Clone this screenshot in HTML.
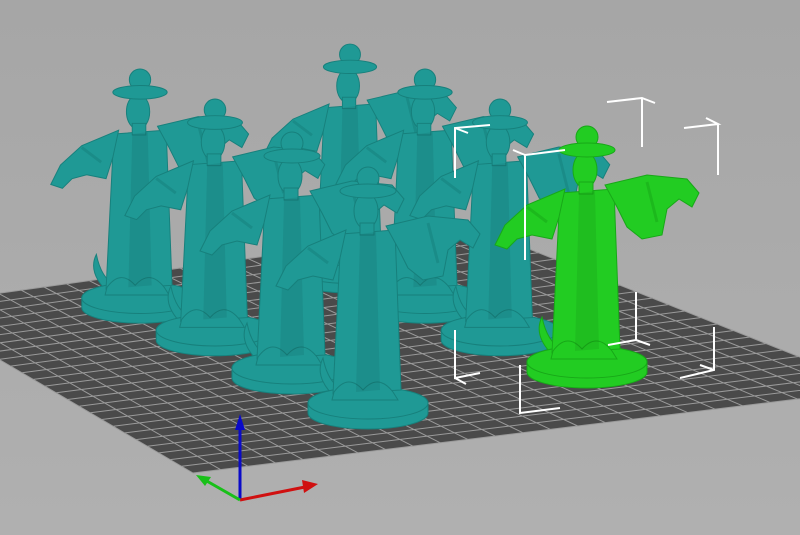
<!DOCTYPE html>
<html><head><meta charset="utf-8"><style>
html,body{margin:0;padding:0;width:800px;height:535px;overflow:hidden;background:#a9a9a9}
svg{display:block}
</style></head><body>
<svg width="800" height="535" viewBox="0 0 800 535" xmlns="http://www.w3.org/2000/svg">
<defs>
<linearGradient id="bg" x1="0" y1="0" x2="0" y2="1"><stop offset="0" stop-color="#a6a6a6"/><stop offset="1" stop-color="#b0b0b0"/></linearGradient>
<g id="fig">
  <path d="M-30,232 Q-55,210 -45,190 Q-40,215 -25,222 Z"/>
  <path d="M-60,245 a60,16 0 0 0 120,0 v-10 a60,16 0 0 0 -120,0 z"/>
  <ellipse cx="0" cy="235" rx="60" ry="16"/>
  <path d="M-27,66 L27,62 L33,222 L-35,226 Z"/>
  <path d="M-22,62 L-60,78 L-82,98 L-92,118 L-80,122 L-70,112 L-55,108 L-35,112 L-28,90 Z"/>
  <path d="M18,58 L60,48 L100,52 L112,66 L105,80 L92,72 L80,82 L75,108 L55,112 L40,100 L30,80 Z"/>
  <ellipse cx="-2" cy="43" rx="12" ry="18"/>
  <rect x="-8" y="55" width="14" height="12"/>
  <circle cx="0" cy="10" r="11"/>
  <ellipse cx="0" cy="23" rx="28" ry="7"/>
  <path d="M-34,224 Q-20,205 -5,222 Q10,205 25,224 L30,232 L-36,232 Z" class="dk"/>
  <path d="M-8,66 L8,64 L12,222 L-12,224 Z" fill-opacity="0.85" stroke="none" fill="#000" opacity="0.08"/>
  <path d="M-60,80 L-40,95 M60,55 L70,95" stroke-width="3" opacity="0.5"/>
</g>
</defs>
<rect width="800" height="535" fill="url(#bg)"/>
<polygon points="193,473 880,389 474,227 -92,306" fill="#4a4a4a"/>
<g stroke="#9a9a9a" stroke-width="1" fill="none">
<path d="
M193,473 L-92,306 M220.5,469.6 L-69.4,302.8 M248,466.3 L-46.7,299.7 M275.4,462.9 L-24,296.5 M302.9,459.6 L-1.4,293.4 M330.4,456.2 L21.3,290.2 M357.9,452.8 L44,287 M385.4,449.5 L66.6,283.9 M412.8,446.1 L89.3,280.7 M440.3,442.8 L112,277.6 M467.8,439.4 L134.6,274.4 M495.3,436.1 L157.3,271.2 M522.8,432.7 L180,268.1 M550.2,429.3 L202.6,264.9 M577.7,426 L225.3,261.8 M605.2,422.6 L248,258.6 M632.7,419.3 L270.6,255.4 M660.2,415.9 L293.3,252.3 M687.6,412.6 L316,249.1 M715.1,409.2 L338.6,246 M742.6,405.8 L361.3,242.8 M770.1,402.5 L384,239.6 M797.6,399.1 L406.6,236.5 M825,395.8 L429.3,233.3 M852.5,392.4 L452,230.2 M880,389 L474,227
M193,473 L880,389 M181.6,466.3 L863.8,382.5 M170.2,459.6 L847.6,376 M158.8,452.9 L831.4,369.5 M147.4,446.3 L815.1,363 M136,439.6 L798.9,356.5 M124.6,432.9 L782.7,350 M113.2,426.2 L766.5,343.5 M101.8,419.5 L750.3,337 M90.4,412.8 L734.1,330.5 M79,406.2 L717.8,324 M67.6,399.5 L701.6,317.5 M56.2,392.8 L685.4,311 M44.8,386.1 L669.2,304.5 M33.4,379.4 L653,298 M22,372.8 L636.8,291.5 M10.6,366.1 L620.6,285 M-0.8,359.4 L604.3,278.5 M-12.2,352.7 L588.1,272 M-23.6,346 L571.9,265.5 M-35,339.4 L555.7,259 M-46.4,332.7 L539.5,252.5 M-57.8,326 L523.2,246 M-69.2,319.3 L507,239.5 M-80.6,312.6 L490.8,233.2 M-92,306 L474,227"/>
</g>
<g fill="#1f9995" stroke="#17807c" stroke-width="1">
<use href="#fig" transform="translate(350,45) scale(0.95)"/>
<use href="#fig" transform="translate(140,70) scale(0.97)"/>
<use href="#fig" transform="translate(425,70) scale(0.97)"/>
<use href="#fig" transform="translate(215,100) scale(0.98)"/>
<use href="#fig" transform="translate(500,100) scale(0.98)"/>
<use href="#fig" transform="translate(292,133)"/>
<use href="#fig" transform="translate(368,168)"/>
</g>
<g fill="#22cc22" stroke="#18a818" stroke-width="1">
<use href="#fig" transform="translate(587,127)"/>
</g>
<g stroke="#ffffff" stroke-width="2" fill="none">
<path d="M607,102 L642,98 L655,103 M642,98 L642,147"/>
<path d="M684,128 L718,124 L706,118 M718,124 L718,175"/>
<path d="M455,178 L455,128 L490,125 M455,128 L468,133"/>
<path d="M525,260 L525,155 L565,150 M525,155 L513,150"/>
<path d="M455,330 L455,378 L480,373 M455,378 L466,384"/>
<path d="M520,365 L520,413 L560,408"/>
<path d="M714,327 L714,370 L680,378 M714,370 L700,365"/>
<path d="M636,292 L636,340 L608,345 M636,340 L650,345"/>
</g>
<g>
<line x1="240" y1="500" x2="240" y2="425" stroke="#0a0ac8" stroke-width="3"/>
<polygon points="240,414 235,430 245,430" fill="#0a0ac8"/>
<line x1="240" y1="500" x2="305" y2="487" stroke="#d01010" stroke-width="3"/>
<polygon points="318,484 302,480 304,493" fill="#d01010"/>
<line x1="240" y1="500" x2="205" y2="480" stroke="#18c018" stroke-width="3"/>
<polygon points="196,475 205,486 211,477" fill="#18c018"/>
</g>
</svg>
</body></html>
